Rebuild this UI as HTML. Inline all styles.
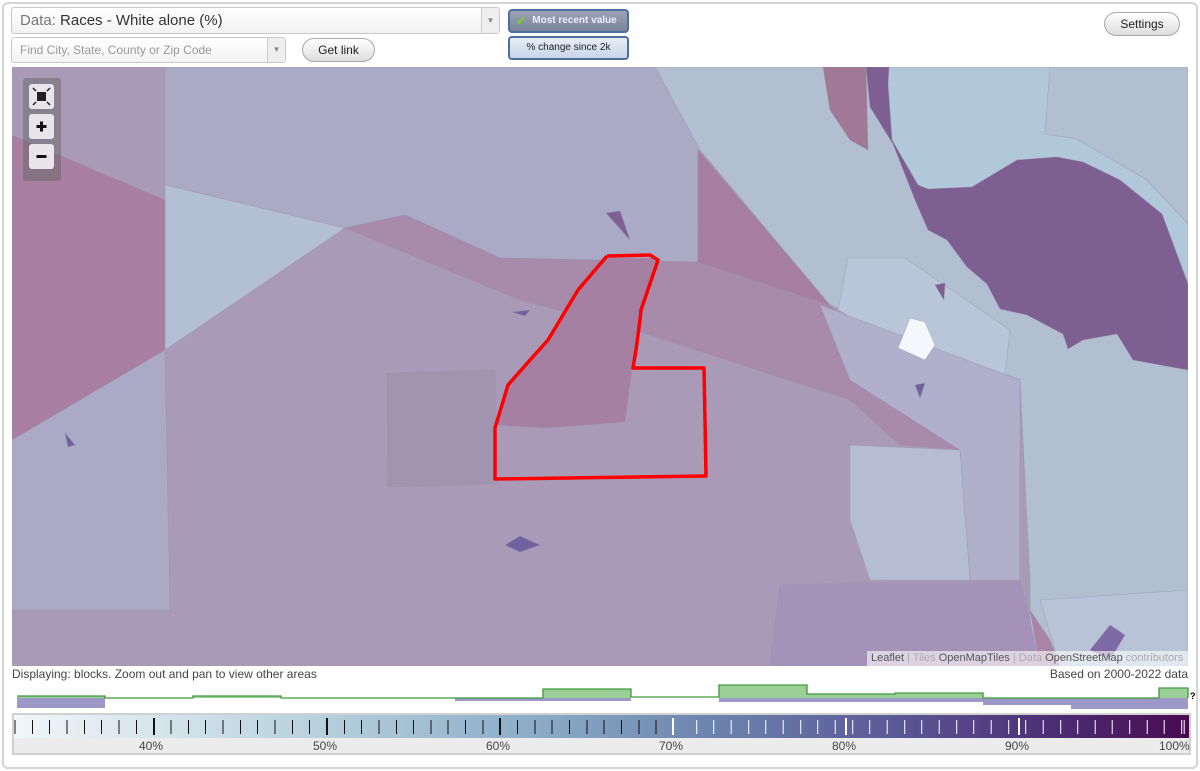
<!DOCTYPE html>
<html><head><meta charset="utf-8"><style>
*{margin:0;padding:0;box-sizing:border-box}
body{width:1200px;height:771px;background:#fff;font-family:"Liberation Sans",sans-serif;position:relative;overflow:hidden}
.frame{position:absolute;left:2px;top:2px;width:1196px;height:767px;border:2px solid #d4d4d4;border-radius:6px}
.abs{position:absolute}
.dd{border:1px solid #c8c8c8;border-radius:3px;background:linear-gradient(#fff,#f2f2f2)}
.arr{position:absolute;right:0;top:0;bottom:0;width:18px;border-left:1px solid #ccc;background:#eee;color:#888;font-size:8px;text-align:center}
.btn{border:1px solid #a8a8a8;border-radius:12px;background:linear-gradient(#fff,#ddd);font-size:12px;text-align:center;color:#222}
.tg{border:2px solid #4c6f9f;border-radius:4px;font-size:10px;text-align:center}
</style></head><body>
<div class="frame"></div>
<div class="abs dd" style="left:11px;top:7px;width:489px;height:27px;font-size:15px;line-height:25px;padding-left:8px;color:#333"><span style="color:#777">Data:</span> Races - White alone (%)<div class="arr" style="line-height:25px">▼</div></div>
<div class="abs dd" style="left:11px;top:37px;width:275px;height:26px;font-size:12px;line-height:24px;padding-left:8px;color:#999">Find City, State, County or Zip Code<div class="arr" style="line-height:24px">▼</div></div>
<div class="abs btn" style="left:302px;top:38px;width:73px;height:24px;line-height:22px">Get link</div>
<div class="abs tg" style="left:508px;top:9px;width:121px;height:24px;line-height:20px;background:linear-gradient(#9aa3b6,#7a8398);color:#eef;font-weight:bold;padding-left:12px"><span style="position:absolute;left:6px;top:0;color:#7c3;font-size:12px">✔</span>Most recent value</div>
<div class="abs tg" style="left:508px;top:36px;width:121px;height:24px;line-height:20px;background:linear-gradient(#e6eef8,#c8d6ea);color:#222">% change since 2k</div>
<div class="abs btn" style="left:1104px;top:12px;width:76px;height:24px;line-height:22px">Settings</div>

<svg class="abs" style="left:0;top:0" width="1200" height="771">
<defs><clipPath id="c"><rect x="12" y="67" width="1176" height="599"/></clipPath></defs>
<g clip-path="url(#c)" stroke="#9a90aa" stroke-width="0.6" stroke-opacity="0.6">
<rect x="12" y="67" width="1176" height="599" fill="#a99bb8"/>
<polygon fill="#aaa9c6" points="165,67 655,67 700,150 698,262 500,258 405,215 345,228 165,185"/>
<polygon fill="#b3bfd3" points="165,185 345,228 165,350"/>
<polygon fill="#a87fa0" points="12,135 165,200 165,350 12,440"/>
<polygon fill="#aaa9c6" points="12,440 165,350 170,610 12,610"/>
<polygon fill="#a88aab" points="345,228 405,215 500,258 698,262 830,305 960,450 900,445 850,400 640,332 520,300"/>
<polygon fill="#a57ea1" points="698,150 830,305 698,262"/>
<polygon fill="#b2bfd1" points="655,67 1188,67 1188,666 1030,666 1030,580 1020,380 830,305 700,150"/>
<polygon fill="#b9c6da" points="848,258 905,258 1010,330 1005,375 900,345 838,310"/>
<polygon fill="#b1c7da" points="889,67 1050,67 1045,134 1077,139 1147,180 1188,224 1188,284 1162,214 1120,180 1083,162 1057,157 1017,160 972,187 928,189 918,185 892,140 888,84"/>
<polygon fill="#7e5f92" points="866,67 889,67 888,84 892,140 918,185 928,189 972,187 1017,160 1057,157 1083,162 1120,180 1162,214 1188,284 1188,370 1160,365 1133,360 1117,334 1083,340 1068,349 1063,334 1027,315 1000,309 987,284 967,267 947,240 928,230 915,200 893,144 870,107"/>
<polygon fill="#a07898" points="823,67 866,67 868,150 850,140 830,110"/>
<polygon fill="#b0afcc" points="820,305 1020,380 1020,580 970,580 960,450 850,380"/>
<polygon fill="#b5bdd3" points="850,445 960,450 970,580 870,580 850,520"/>
<polygon fill="#f4f7fb" points="910,318 925,322 935,345 925,360 898,348"/>
<polygon fill="#b8c3d8" points="1040,600 1188,590 1188,666 1060,666"/>
<polygon fill="#7e6aa5" points="1090,650 1110,625 1125,635 1110,660"/>
<polygon fill="#a294ae" points="387,373 495,370 497,484 388,487"/>
<polygon fill="#a580a3" points="605,258 655,258 640,312 632,368 625,422 545,428 497,425 510,380 548,340 578,290"/>
<polygon fill="#a592b8" points="780,585 900,582 1020,582 1030,620 1040,666 770,666"/>
<polygon fill="#aa84a6" points="1030,610 1050,640 1060,666 1040,666"/>
<polygon fill="#7e5f92" points="606,213 620,211 630,240"/>
<polygon fill="#6e639e" points="505,545 520,536 540,545 520,552"/>
<polygon fill="#6e639e" points="512,312 530,310 525,316"/>
<polygon fill="#6e639e" points="65,433 75,445 68,447"/>
<polygon fill="#7e5f92" points="935,285 945,283 944,300"/>
<polygon fill="#6e639e" points="915,385 925,383 920,398"/>
<polyline fill="none" stroke="#ff0000" stroke-width="3.5" stroke-opacity="1" stroke-linejoin="round" points="607,256 650,255 658,260 641,310 640,320 636,350 633,368 704,368 706,476 495,479 495,428 508,385 530,360 548,340 578,290 607,256"/>
<rect x="23" y="78" width="38" height="103" rx="3" fill="#666" fill-opacity="0.5" stroke="none"/>
<rect x="29" y="84" width="25" height="25" rx="3" fill="#e8e4ea" stroke="none"/>
<rect x="29" y="114" width="25" height="25" rx="3" fill="#e8e4ea" stroke="none"/>
<rect x="29" y="144" width="25" height="25" rx="3" fill="#e8e4ea" stroke="none"/>
<rect x="37" y="92" width="9" height="9" fill="#222" stroke="none"/>
<path d="M33 88l3 3M50 88l-3 3M33 105l3-3M50 105l-3-3" stroke="#222" stroke-width="1.5" stroke-opacity="1"/>
<path d="M36.5 126.5h10M41.5 121.5v10" stroke="#111" stroke-width="3" stroke-opacity="1"/>
<path d="M36.5 156.5h10" stroke="#111" stroke-width="3" stroke-opacity="1"/>
</g>
<g>
<path d="M17 698V708H105V698ZM455 698V701H631V698ZM719 698V702H983V698ZM983 698V705H1071V698ZM1071 698V709H1159V698ZM1159 698V709H1188V698Z" fill="#9c98c8"/>
<path d="M17 698V696H105V698ZM193 698V696H281V698ZM543 698V689H631V698ZM719 698V685H807V698ZM807 698V694H895V698ZM895 698V693H983V698ZM1159 698V688H1188V698Z" fill="#9cce98"/>
<path d="M17 696H105V698H193V696H281V698H543V689H631V697H719V685H807V694H895V693H983V698H1159V688H1188V698" fill="none" stroke="#3c9a3c" stroke-width="1.3"/>
</g>
<text x="1190" y="699" font-size="9" font-weight="bold" font-family="Liberation Sans">?</text>
</svg>
<div class="abs" style="left:867px;top:651px;width:321px;height:15px;background:rgba(255,255,255,.6);font-size:11px;line-height:15px;padding-left:4px;color:#aaa"><span style="color:#555">Leaflet</span> | Tiles <span style="color:#555">OpenMapTiles</span> | Data <span style="color:#555">OpenStreetMap</span> contributors</div>
<div class="abs" style="left:12px;top:667px;font-size:12px;color:#444">Displaying: blocks. Zoom out and pan to view other areas</div>
<div class="abs" style="right:12px;top:667px;font-size:12px;color:#444">Based on 2000-2022 data</div>
<div class="abs" style="left:12px;top:713px;width:1179px;height:42px;border:2px solid #d0d0d0;background:#ececec">
 <div class="abs" style="left:0;top:0;width:1175px;height:23px;background:linear-gradient(90deg,#f1f6f9 0%,#b9d2de 25%,#8aaac6 45%,#6b82ad 60%,#5b5896 75%,#4c2f74 88%,#4a0a50 100%)"></div>
 <div class="abs" style="left:0;top:5px;width:668px;height:14px;background:repeating-linear-gradient(90deg,transparent 0,transparent 0.5px,#111 0.5px,#111 1.5px,transparent 1.5px,transparent 17.33px)"></div>
 <div class="abs" style="left:668px;top:5px;width:505px;height:14px;background:repeating-linear-gradient(90deg,transparent 0,transparent 0.5px,#fff 0.5px,#fff 1.5px,transparent 1.5px,transparent 17.33px);background-position:-3.8px 0"></div>
 <div class="abs" style="left:139px;top:3px;width:2px;height:17px;background:#111"></div>
 <div class="abs" style="left:312px;top:3px;width:2px;height:17px;background:#111"></div>
 <div class="abs" style="left:485px;top:3px;width:2px;height:17px;background:#111"></div>
 <div class="abs" style="left:658px;top:3px;width:2px;height:17px;background:#fff"></div>
 <div class="abs" style="left:831px;top:3px;width:2px;height:17px;background:#fff"></div>
 <div class="abs" style="left:1004px;top:3px;width:2px;height:17px;background:#fff"></div>
 <div class="abs" style="left:125px;top:24px;font-size:12px;color:#444">40%</div>
 <div class="abs" style="left:299px;top:24px;font-size:12px;color:#444">50%</div>
 <div class="abs" style="left:472px;top:24px;font-size:12px;color:#444">60%</div>
 <div class="abs" style="left:645px;top:24px;font-size:12px;color:#444">70%</div>
 <div class="abs" style="left:818px;top:24px;font-size:12px;color:#444">80%</div>
 <div class="abs" style="left:991px;top:24px;font-size:12px;color:#444">90%</div>
 <div class="abs" style="left:1145px;top:24px;font-size:12px;color:#444">100%</div>
</div>
</body></html>
